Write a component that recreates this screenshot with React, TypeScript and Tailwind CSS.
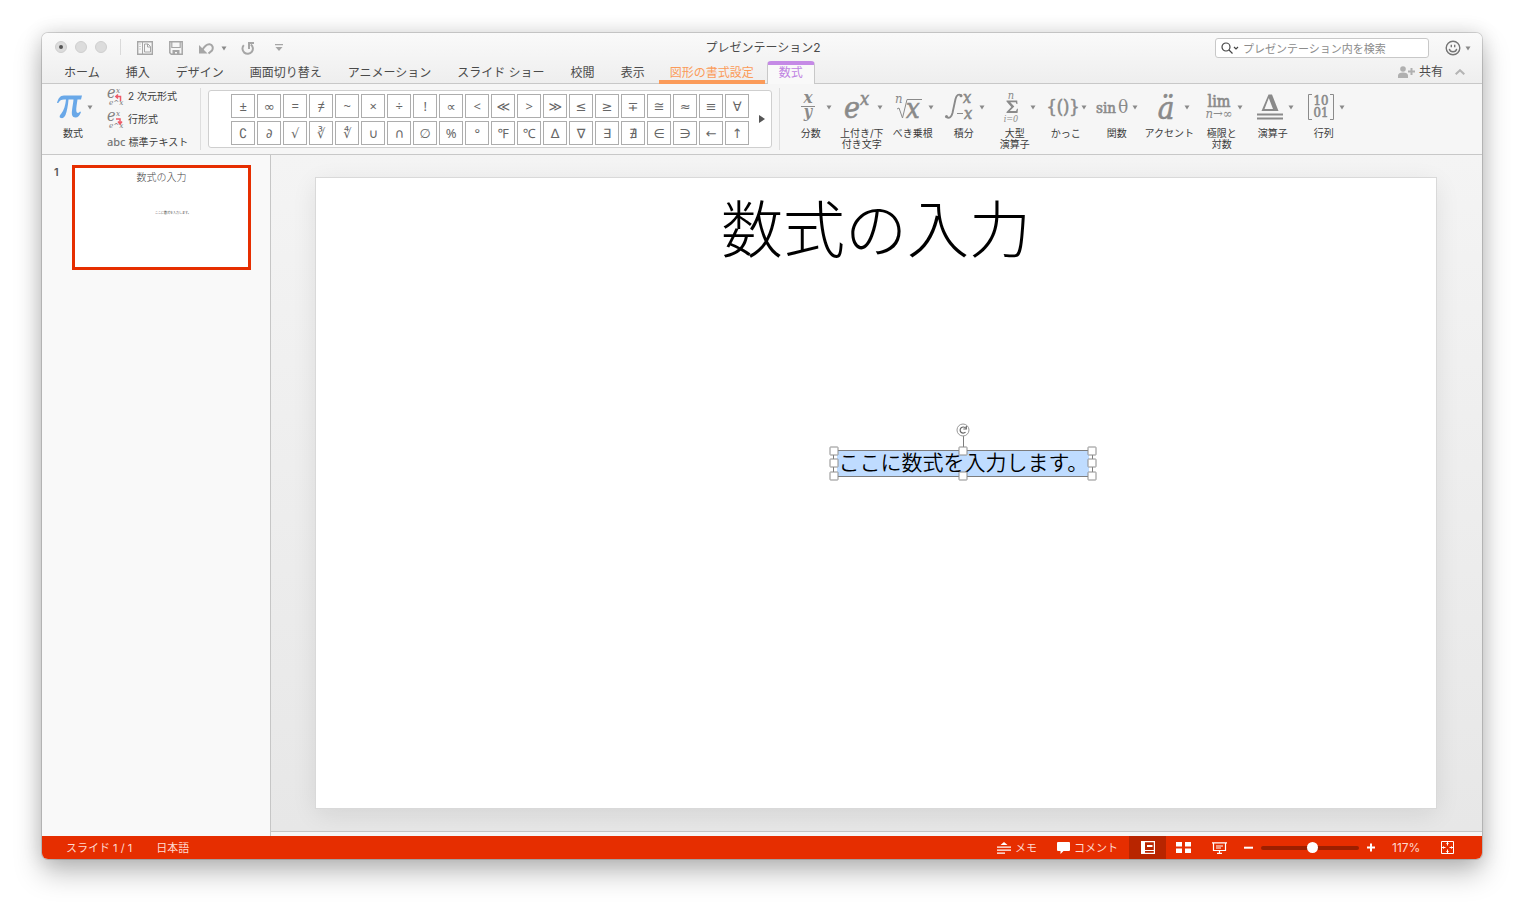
import { useState, type ReactNode } from "react";
import { clsx } from "clsx";

const tabs = ["ホーム", "挿入", "デザイン", "画面切り替え", "アニメーション", "スライド ショー", "校閲", "表示"];

const symbols = [
  "±", "∞", "=", "≠", "~", "×", "÷", "!", "∝", "<", "≪", ">", "≫", "≤", "≥", "∓", "≅", "≈", "≡", "∀",
  "∁", "∂", "√", "∛", "∜", "∪", "∩", "∅", "%", "°", "℉", "℃", "∆", "∇", "∃", "∄", "∈", "∋", "←", "↑",
];

function Caret({ className }: { className?: string }) {
  return (
    <svg viewBox="0 0 6 5" className={clsx("w-1.5 h-[5px] shrink-0", className)} fill="#8a8a8a" aria-hidden="true">
      <path d="M.5.5h5L3 4.5z" />
    </svg>
  );
}

const serif = "'DejaVu Serif Condensed', 'DejaVu Serif', 'Liberation Serif', serif";

function Glyph({ x, y, size, italic, bold, heavy, anchor = "start", children }: {
  x: number;
  y: number;
  size: number;
  italic?: boolean;
  bold?: boolean;
  heavy?: boolean;
  anchor?: "start" | "middle";
  children: ReactNode;
}) {
  return (
    <text
      x={x}
      y={y}
      fontSize={size}
      fontFamily={serif}
      fontStyle={italic ? "italic" : "normal"}
      fontWeight={bold ? 700 : 400}
      textAnchor={anchor}
      stroke={heavy ? "#8a8a8a" : "none"}
      strokeWidth=".6"
    >
      {children}
    </text>
  );
}

interface Structure {
  label: string[];
  wide?: boolean;
  icon: ReactNode;
}

const structures: Structure[] = [
  {
    label: ["分数"],
    icon: (
      <>
        <Glyph x={18} y={12} size={17} italic bold anchor="middle">x</Glyph>
        <path d="M11 15.5h14" stroke="#8a8a8a" />
        <Glyph x={18} y={26} size={16} italic bold anchor="middle">y</Glyph>
      </>
    ),
  },
  {
    label: ["上付き/下", "付き文字"],
    icon: (
      <>
        <Glyph x={3} y={27} size={30} italic heavy>e</Glyph>
        <Glyph x={19} y={14} size={18} italic heavy>x</Glyph>
      </>
    ),
  },
  {
    label: ["べき乗根"],
    icon: (
      <>
        <Glyph x={3} y={12} size={13} italic>n</Glyph>
        <path d="M5 18l2-1 3.5 10L15 8.500h15" fill="none" stroke="#8a8a8a" />
        <Glyph x={14} y={27} size={27} italic heavy>x</Glyph>
      </>
    ),
  },
  {
    label: ["積分"],
    icon: (
      <>
        <path d="M18.500 4.500c-3-2-5-.5-6 3.500L9.500 22c-1 4-3 6-6.500 4" fill="none" stroke="#8a8a8a" strokeWidth="1.900" />
        <circle cx="18" cy="4.700" r="1.500" />
        <circle cx="3.500" cy="25.500" r="1.500" />
        <Glyph x={20} y={12} size={16} italic heavy>x</Glyph>
        <path d="M14 22.500h6" stroke="#8a8a8a" />
        <Glyph x={21} y={28} size={16} italic heavy>x</Glyph>
      </>
    ),
  },
  {
    label: ["大型", "演算子"],
    icon: (
      <>
        <Glyph x={17} y={8} size={11} italic anchor="middle">n</Glyph>
        <path d="M12.500 9.500h10.700l.3 3.500h-1l-.7-1.800h-5.500l4 4.300-4.500 4.500h6.200l1-2.200h1l-.5 4.200H12.500v-1l4.800-5-4.800-5.500z" />
        <Glyph x={17} y={31} size={9} italic anchor="middle">i=0</Glyph>
      </>
    ),
  },
  { label: ["かっこ"], icon: <Glyph x={18} y={22} size={18} heavy anchor="middle">{"{()}"}</Glyph> },
  {
    label: ["関数"],
    icon: (
      <>
        <Glyph x={0} y={22} size={15} heavy>sin</Glyph>
        <Glyph x={22} y={22} size={19}>θ</Glyph>
      </>
    ),
  },
  { label: ["アクセント"], wide: true, icon: <Glyph x={18} y={28} size={31} italic heavy anchor="middle">ä</Glyph> },
  {
    label: ["極限と", "対数"],
    icon: (
      <>
        <Glyph x={18} y={16} size={16} heavy anchor="middle">lim</Glyph>
        <Glyph x={18} y={27} size={13} italic anchor="middle">n→∞</Glyph>
      </>
    ),
  },
  {
    label: ["演算子"],
    icon: (
      <>
        <path fillRule="evenodd" d="M16.500 3.500h3.500L26.500 20H9.500zM16.800 7L12.500 18H21z" />
        <path d="M5 23.500h26M5 27.500h26" stroke="#8a8a8a" strokeWidth="2" />
      </>
    ),
  },
  {
    label: ["行列"],
    icon: (
      <>
        <path d="M9 3.500H5.500v25H9M27 3.500h3.500v25H27" fill="none" stroke="#8a8a8a" />
        <Glyph x={18} y={14} size={13} heavy anchor="middle">10</Glyph>
        <Glyph x={18} y={26} size={13} heavy anchor="middle">01</Glyph>
      </>
    ),
  },
];

function StructureButton({ label, wide, icon }: Structure) {
  return (
    <button className={clsx("flex flex-col items-center shrink-0", wide ? "w-[54px]" : "w-[51px]")}>
      <span className="flex items-center">
        <svg viewBox="0 0 36 32" className="w-9 h-8 overflow-visible" fill="#8a8a8a" aria-hidden="true">{icon}</svg>
        <Caret />
      </span>
      <span className="mt-[5px] text-[10px] leading-[11px] whitespace-nowrap text-[#3c3c3c]">
        {label.map((line) => (
          <span key={line} className="block">{line}</span>
        ))}
      </span>
    </button>
  );
}

function FormatIcon({ down }: { down?: boolean }) {
  return (
    <svg viewBox="0 0 16 20" className="w-4 h-5 overflow-visible" fill="#808080" aria-hidden="true">
      <Glyph x={0} y={11} size={16} italic>e</Glyph>
      <Glyph x={9} y={6} size={8} italic>x</Glyph>
      <Glyph x={2} y={18} size={8} italic>e^x</Glyph>
      {down ? (
        <path d="M9 9h4v4M11 11.500l2 2.500 2-2.500" fill="none" stroke="#ee5a68" strokeWidth="1.500" />
      ) : (
        <path d="M13.500 14V9.500H9.500M11 7.500L8.800 9.500l2.200 2" fill="none" stroke="#ee5a68" strokeWidth="1.500" />
      )}
    </svg>
  );
}

function TitleBar() {
  return (
    <div className="grid grid-cols-[1fr_auto_1fr] items-center h-7 pl-[13px] pr-[11px]">
      <div className="flex items-center">
        <div className="flex gap-2">
          <button aria-label="閉じる" className="flex items-center justify-center size-3 rounded-full border border-[#cfcfcf] bg-[#dcdcdc]">
            <span className="size-1 rounded-full bg-[#555]" />
          </button>
          <button aria-label="最小化" className="size-3 rounded-full border border-[#cfcfcf] bg-[#dcdcdc]" />
          <button aria-label="拡大" className="size-3 rounded-full border border-[#cfcfcf] bg-[#dcdcdc]" />
        </div>
        <span className="ml-[13px] w-px h-4 bg-[#dadada]" />
        <button aria-label="レイアウト" className="ml-4 pt-0.5">
          <svg viewBox="0 0 16 14" className="w-4 h-3.5" fill="none" stroke="#a6a6a6">
            <path d="M.7.7h14.600v12.600H.7z" strokeWidth="1.400" />
            <path d="M2.500 3h1M2.500 5.500h1M2.500 8h1" />
            <path d="M5.500 1v12" />
            <path d="M7.500 3h3.500l2.500 2.500v5.500h-6zM10.500 3v3h3" />
          </svg>
        </button>
        <button aria-label="保存" className="ml-4 pt-0.5">
          <svg viewBox="0 0 14 14" className="size-3.5" fill="none" stroke="#a6a6a6">
            <path d="M.8.8h12.400v12.400H2.300L.8 11.700z" strokeWidth="1.500" />
            <path d="M2.800 1v5.500h8.400V1" strokeWidth="1.200" />
            <path fill="#a6a6a6" stroke="none" d="M3.500 9h7v4.500H8V11H6v2.500H3.500z" />
          </svg>
        </button>
        <button aria-label="元に戻す" className="ml-[15px] pt-0.5">
          <svg viewBox="0 0 16 14" className="w-4 h-3.5" fill="none" stroke="#a6a6a6" strokeWidth="2">
            <path d="M4 9.500C6.500 5 9 3 11.700 3.300c3 .5 3.800 3.700 2.300 6.200l-3.500 3" />
            <path fill="#a6a6a6" stroke="none" d="M1 4v8.500h8.500z" />
          </svg>
        </button>
        <button aria-label="元に戻す履歴" className="ml-[7px] pt-0.5">
          <Caret />
        </button>
        <button aria-label="繰り返し" className="ml-3.5 pt-0.5">
          <svg viewBox="0 0 14 14" className="size-3.5" fill="none" stroke="#a6a6a6" strokeWidth="2">
            <path d="M2.800 4.200a5.200 5.200 0 1 0 7 -.7" />
            <path d="M8 8V2h5" />
          </svg>
        </button>
        <button aria-label="カスタマイズ" className="ml-5 pt-0.5">
          <svg viewBox="0 0 8 8" className="size-2" fill="#a6a6a6">
            <path d="M0 0h8v1.200H0zM.5 3h7L4 7z" />
          </svg>
        </button>
      </div>
      <h1 className="pt-0.5 text-xs text-[#4a4a4a]">プレゼンテーション2</h1>
      <div className="flex items-center justify-end pt-0.5">
        <label className="flex items-center w-[214px] h-5 pl-[5px] rounded-[3px] border border-[#c8c8c8] bg-white">
          <svg viewBox="0 0 18 12" className="w-[18px] h-3 shrink-0" fill="none" stroke="#444" strokeWidth="1.200" aria-hidden="true">
            <circle cx="5" cy="5" r="4" />
            <path d="M8 8l3.500 3.500M13 5l2 2 2-2" />
          </svg>
          <input
            type="search"
            aria-label="プレゼンテーション内を検索"
            placeholder="プレゼンテーション内を検索"
            className="flex-1 min-w-0 pt-0.5 ml-1 text-[11px] outline-none placeholder:text-[#8c8c8c]"
          />
        </label>
        <button aria-label="フィードバック" className="flex items-center gap-1 ml-4">
          <svg viewBox="0 0 16 16" className="size-4" fill="none" stroke="#757575" strokeWidth="1.400">
            <circle cx="8" cy="8" r="6.800" />
            <path d="M4.300 8.800c.8 4 6.600 4 7.400 0M6.300 4.800v2.400M9.700 4.800v2.400" />
          </svg>
          <Caret />
        </button>
      </div>
    </div>
  );
}

function TabBar() {
  return (
    <nav className="flex items-stretch justify-between h-[23px] pl-2.5 pr-[17px] text-xs text-[#4a4a4a] shadow-[inset_0_-1px_0_#c8c8c8]">
      <div className="flex gap-0.5">
        {tabs.map((tab) => (
          <button key={tab} className="px-3 whitespace-nowrap">{tab}</button>
        ))}
        <button className="px-[11px] pt-1 whitespace-nowrap border-b-4 border-[#fb9b59] rounded-t-sm text-[#fb9b59]">図形の書式設定</button>
        <button className="px-[11px] pb-1 whitespace-nowrap border-x border-t-4 border-x-[#c8c8c8] border-t-[#c58ae6] rounded-t-sm bg-[#f9f9f9] text-[#bf83e2]">
          数式
        </button>
      </div>
      <div className="flex items-center gap-3 pb-0.5">
        <button className="flex items-center gap-1">
          <svg viewBox="0 0 17 12" className="w-[17px] h-3" fill="#b0b0b0" aria-hidden="true">
            <circle cx="5" cy="3" r="2.800" />
            <path d="M0 12V9.500C0 7.500 2 6.500 5 6.500s5 1 5 3V12zM12.500 2h2v2.500H17v2h-2.500V9h-2V6.500H10v-2h2.500z" />
          </svg>
          共有
        </button>
        <button aria-label="リボンを折りたたむ">
          <svg viewBox="0 0 10 6" className="w-2.5 h-1.5" fill="none" stroke="#b4b4b4" strokeWidth="2">
            <path d="M.7 5.300L5 1.200l4.300 4.100" />
          </svg>
        </button>
      </div>
    </nav>
  );
}

function Ribbon() {
  return (
    <div className="flex items-start h-[71px] pl-[15px] border-b border-[#c8c8c8] bg-[#f6f6f6] text-[10px] text-[#3c3c3c]">
      <button className="flex flex-col items-center pt-[7px]">
        <span className="flex items-center gap-1">
          <svg viewBox="0 0 26 32" className="w-[26px] h-8" aria-hidden="true">
            <path
              fill="#69a8e8"
              d="M0 12c1-4 3-7.500 7-7.500h18l-1 4h-3.500c-.7 5-1.500 9-1.200 11.500.3 2.500 2.500 2.500 3.700.5l1 .5c-1 3.500-3 5.500-5.500 5.500-3.500 0-4-3-3.500-7 .4-4 1.200-7 1.500-11h-5c-.5 6-1.500 11.500-3 15.500-1 2.500-2.800 3.500-4.500 3-2-.5-1.500-2.500 0-4 3-3.500 4.500-9 5-14.500H7C4.500 8.500 2.500 9.500 1.300 12z"
            />
          </svg>
          <Caret />
        </span>
        <span className="mt-[5px] mr-1 leading-[11px]">数式</span>
      </button>
      <div className="flex flex-col ml-3.5 pt-px">
        <button className="flex items-center gap-[5px] h-[23px]">
          <FormatIcon />2 次元形式
        </button>
        <button className="flex items-center gap-[5px] h-[23px]">
          <FormatIcon down />行形式
        </button>
        <button className="flex items-center gap-[3px] h-[23px]">
          <span className="text-[11px] font-medium text-[#777] [font-family:'Noto_Sans',sans-serif]">abc</span>標準テキスト
        </button>
      </div>
      <span className="self-center ml-3 w-px h-[62px] bg-[#dedede]" />
      <div className="flex items-center ml-[7px] mt-1.5 h-[58px] pl-[22px] pr-1.5 rounded-[3px] border border-[#cfcfcf] bg-white">
        <div className="grid grid-cols-[repeat(20,24px)] gap-x-0.5 gap-y-[3px] [font-family:'Noto_Sans','DejaVu_Sans',sans-serif]">
          {symbols.map((symbol) => (
            <button key={symbol} className="flex items-center justify-center h-6 border border-[#adadad] bg-white text-[13px] leading-5 text-[#666]">
              {symbol}
            </button>
          ))}
        </div>
        <button aria-label="その他の記号" className="ml-2.5">
          <svg viewBox="0 0 6 8" className="w-1.5 h-2" fill="#555"><path d="M0 0l6 4-6 4z" /></svg>
        </button>
      </div>
      <span className="self-center ml-[7px] w-px h-[62px] bg-[#dedede]" />
      <div className="flex ml-[5px] pt-[7px]">
        {structures.map((structure) => (
          <StructureButton key={structure.label.join("")} {...structure} />
        ))}
      </div>
    </div>
  );
}

function SlidePanel() {
  return (
    <aside className="flex items-start w-[229px] shrink-0 pt-2.5 pl-3 border-r border-[#c6c6c6] bg-[#f9f9f9]">
      <span className="w-[18px] text-[11px] leading-[14px] font-semibold text-[#555]">1</span>
      <button className="flex flex-col w-[179px] h-[105px] border-3 border-[#e62e00] bg-white text-left text-[#444] font-light">
        <span className="self-center text-[10px] leading-[18px]">数式の入力</span>
        <span className="mt-6 ml-20 text-[3px] leading-[6px] whitespace-nowrap font-normal">ここに数式を入力します。</span>
      </button>
    </aside>
  );
}

const handles = [
  "left-0 top-0", "left-1/2 top-0", "left-full top-0",
  "left-0 top-1/2", "left-full top-1/2",
  "left-0 top-full", "left-1/2 top-full", "left-full top-full",
];

function EquationBox() {
  return (
    <div className="absolute left-[46.2%] top-[43.1%] w-[260px] h-[27px] border border-[#7d7d7d]">
      <p className="h-full mx-[3px] pl-px bg-[#bfdcff] text-[21px] leading-[24px] whitespace-nowrap overflow-hidden text-black font-[350]">
        ここに数式を入力します。
      </p>
      <span className="absolute left-1/2 -top-4 w-px h-4 bg-[#7d7d7d]" />
      <svg viewBox="0 0 14 14" className="absolute left-1/2 -top-7 size-3.5 -translate-x-1/2" fill="none" stroke="#666">
        <circle cx="7" cy="7" r="6" fill="#fff" stroke="#999" />
        <path d="M9.500 9.200a3.100 3.100 0 1 1 .2-4" strokeWidth="1.200" />
        <path d="M10.300 3v3H7.300" strokeWidth="1.200" />
      </svg>
      {handles.map((position) => (
        <span
          key={position}
          className={clsx("absolute size-[9px] -translate-1/2 rounded-[1px] border border-[#8c8c8c] bg-white", position)}
        />
      ))}
    </div>
  );
}

function Canvas() {
  return (
    <main className="flex-1 flex flex-col min-w-0">
      <div className="flex-1 pt-[23px] pl-[45px] pr-[46px] pb-[22px] bg-linear-to-b from-[#f4f4f4] to-[#e7e7e7]">
        <div className="relative w-full aspect-video bg-white outline outline-[#d9d9d9] shadow-[0_6px_24px_rgba(0,0,0,0.09)]">
          <h2 className="text-center text-[62px] leading-[106px] text-black font-light">数式の入力</h2>
          <EquationBox />
        </div>
      </div>
      <div className="h-[5px] border-t border-[#c6c6c6] bg-[#f6f6f6]" />
    </main>
  );
}

function StatusBar() {
  const [zoom, setZoom] = useState(53);

  return (
    <footer className="flex items-center h-[23px] pl-6 pr-7 bg-[#e62e00] text-[11px] text-[#ffd9cf]">
      <span className="pt-0.5">スライド 1 / 1</span>
      <button className="ml-6 pt-0.5">日本語</button>
      <button className="flex items-center gap-1 ml-auto">
        <svg viewBox="0 0 14 12" className="w-3.5 h-3" fill="#fff" aria-hidden="true">
          <path d="M3.500 3L7 0l3.500 3zM0 4.500h14v1.200H0zM0 7.500h14v1.200H0zM0 10.500h8v1.200H0z" />
        </svg>
        <span className="pt-0.5">メモ</span>
      </button>
      <button className="flex items-center gap-1 ml-5">
        <svg viewBox="0 0 13 12" className="w-[13px] h-3" fill="#fff" aria-hidden="true">
          <path d="M1 0h11a1 1 0 0 1 1 1v7a1 1 0 0 1-1 1H6.500L3.500 12V9H1a1 1 0 0 1-1-1V1a1 1 0 0 1 1-1z" />
        </svg>
        <span className="pt-0.5">コメント</span>
      </button>
      <button aria-label="標準" className="flex items-center justify-center w-[37px] h-full ml-[11px] bg-[#b82500]">
        <svg viewBox="0 0 14 13" className="w-3.5 h-[13px]" fill="none" stroke="#fff">
          <path d="M.6.6h12.800v11.800H.6z" strokeWidth="1.200" />
          <path d="M1 1h2.500v11H1z" fill="#fff" />
          <path d="M6 4h5.500v2H6z" fill="#fff" stroke="none" />
          <path d="M4 9.500h9" />
        </svg>
      </button>
      <button aria-label="スライド一覧" className="ml-2.5">
        <svg viewBox="0 0 15 11" className="w-[15px] h-[11px]" fill="#fff">
          <path d="M0 0h6v4.500H0zM9 0h6v4.500H9zM0 6.500h6V11H0zM9 6.500h6V11H9z" />
        </svg>
      </button>
      <button aria-label="スライド ショー" className="ml-[21px]">
        <svg viewBox="0 0 15 12" className="w-[15px] h-3" fill="none" stroke="#fff" strokeWidth="1.200">
          <path d="M0 .8h15M1.500 1v7.500h12V1M4 4h7M4 6h5M7.500 8.500v3M5 11.400h5" />
        </svg>
      </button>
      <button aria-label="縮小" className="ml-[17px]" onClick={() => setZoom(zoom - 5)}>
        <svg viewBox="0 0 9 9" className="size-[9px]" fill="#fff"><path d="M0 3.700h9v2H0z" /></svg>
      </button>
      <input
        type="range"
        aria-label="ズーム"
        value={zoom}
        onChange={(e) => setZoom(Number(e.target.value))}
        className="w-[98px] h-1 mx-2 appearance-none rounded-full bg-[#9c1f00] [&::-webkit-slider-thumb]:appearance-none [&::-webkit-slider-thumb]:size-[11px] [&::-webkit-slider-thumb]:rounded-full [&::-webkit-slider-thumb]:bg-white"
      />
      <button aria-label="拡大表示" onClick={() => setZoom(zoom + 5)}>
        <svg viewBox="0 0 8 9" className="w-2 h-[9px]" fill="#fff"><path d="M3 .5h2v3h3v2H5v3H3v-3H0v-2h3z" /></svg>
      </button>
      <span className="ml-[17px] w-[30px] text-xs">117%</span>
      <button aria-label="ウィンドウに合わせる" className="ml-[19px]">
        <svg viewBox="0 0 13 13" className="size-[13px]" fill="none" stroke="#fff">
          <path d="M.5.5h12v12H.5z" />
          <path d="M6.500 1v3.500M6.500 8.500V12M1 6.500h3.500M8.500 6.500H12" />
          <path d="M5 3l1.500-1.500L8 3M5 10l1.500 1.500L8 10M3 5L1.500 6.500 3 8M10 5l1.500 1.500L10 8" strokeWidth=".6" />
        </svg>
      </button>
    </footer>
  );
}

export default function App() {
  return (
    <div className="flex min-h-screen px-[42px] pt-[33px] pb-[50px] bg-white [font-family:'Inter','Noto_Sans_CJK_JP',sans-serif]">
      <div className="flex-1 flex flex-col min-w-0 overflow-hidden rounded-md shadow-[0_0_0_1px_rgba(0,0,0,0.14),0_0_20px_rgba(0,0,0,0.14),0_14px_28px_rgba(0,0,0,0.25)]">
        <header className="bg-linear-to-b from-[#fafafa] to-[#eeeeee]">
          <TitleBar />
          <TabBar />
        </header>
        <Ribbon />
        <div className="flex-1 flex">
          <SlidePanel />
          <Canvas />
        </div>
        <StatusBar />
      </div>
    </div>
  );
}
